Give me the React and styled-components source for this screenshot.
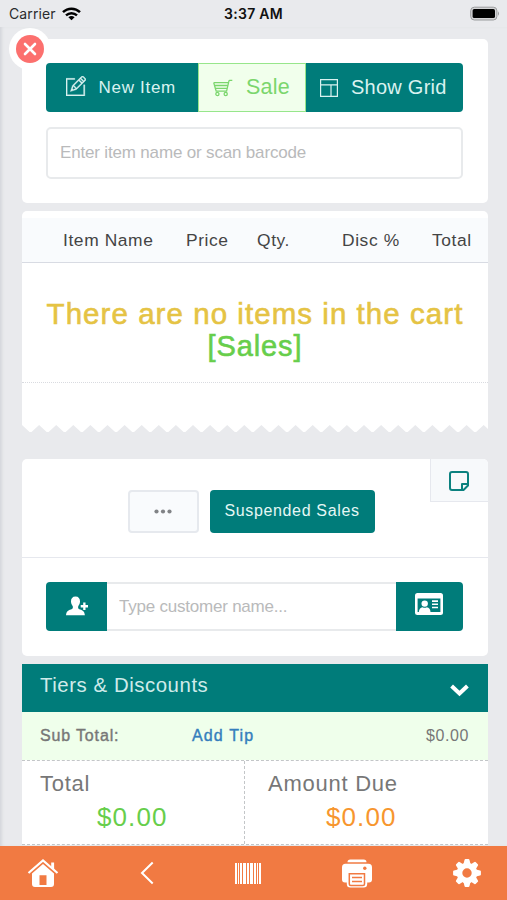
import React from 'react';
import styled, { createGlobalStyle } from 'styled-components';
import { TfiPencilAlt } from 'react-icons/tfi';

const GlobalStyle = createGlobalStyle`
    * {
        box-sizing: border-box;
    }

    body {
        margin: 0;
        background: #e9eaed;
        font-family: 'Liberation Sans', Arial, sans-serif;
    }

    button {
        font-family: inherit;
        margin: 0;
        padding: 0;
        border: 0;
    }
`;

const Screen = styled.div`
    position: relative;
    display: flex;
    flex-direction: column;
    width: 507px;
    height: 900px;
    overflow: hidden;
    background: #e9eaed;
`;

const StatusBar = styled.header`
    display: grid;
    grid-template-columns: 1fr auto 1fr;
    align-items: center;
    flex: none;
    height: 27px;
    padding: 0 7px 0 9px;
    font-family: Inter, sans-serif;
    font-size: 14px;
    color: #2b2c2e;

    .carrier {
        display: flex;
        align-items: center;
        gap: 6px;
        letter-spacing: 0.1px;
    }

    .time {
        margin-right: 2px;
        font-weight: 600;
        color: #111;
        letter-spacing: 0.3px;
    }

    .battery {
        justify-self: end;
    }
`;

const Content = styled.main`
    flex: 1;
    min-height: 0;
    padding: 12px 19px 0 22px;
    box-shadow: inset 3px 0 3px -1px #d5d7db;
`;

const Card = styled.section`
    height: ${({ $height }) => $height}px;
    margin-bottom: ${({ $gap }) => $gap || 0}px;
    padding-top: ${({ $top }) => $top || 0}px;
    border-radius: ${({ $radius }) => $radius || '5px'};
    background: #fff;
`;

const CloseButton = styled.button`
    position: absolute;
    left: 9px;
    top: 28px;
    display: flex;
    align-items: center;
    justify-content: center;
    width: 42px;
    height: 42px;
    border-radius: 50%;
    background: #fff;
`;

const Search = styled.div`
    display: flex;
    flex-direction: column;
    gap: 15px;
    padding: 24px 25px 0 24px;
`;

const ButtonGroup = styled.div`
    display: flex;
    height: 49px;
    border-radius: 4px;
    overflow: hidden;
`;

const GroupButton = styled.button`
    display: flex;
    align-items: center;
    width: ${({ $width }) => $width}px;
    padding-left: ${({ $pad }) => $pad}px;
    gap: ${({ $gap }) => $gap}px;
    font-size: ${({ $size }) => $size}px;
    letter-spacing: ${({ $spacing }) => $spacing}px;
    white-space: nowrap;
    color: ${({ $active }) => ($active ? '#7bd66d' : '#d9f2f0')};
    background: ${({ $active }) => ($active ? '#f1ffec' : '#007c7a')};
    border: ${({ $active }) => ($active ? '1px solid #97e68b' : '0')};

    svg {
        flex: none;
    }

    .pencil {
        margin-bottom: 3px;
        stroke: currentColor;
        stroke-width: 0.3px;
    }
`;

const Field = styled.input`
    width: 100%;
    height: ${({ $height }) => $height}px;
    padding: 0 12px;
    border: solid #e8eaec;
    border-width: ${({ $joined }) => ($joined ? '2px 0' : '2px')};
    border-radius: ${({ $joined }) => ($joined ? '0' : '5px')};
    outline: 0;
    background: #fff;
    font-family: inherit;
    font-size: 17px;
    letter-spacing: ${({ $spacing }) => $spacing}px;

    &::placeholder {
        color: #b9babb;
        opacity: 1;
    }
`;

const TableHead = styled.div`
    display: grid;
    grid-template-columns: 123px 71px 85px 90px 1fr;
    align-items: center;
    height: 45px;
    padding-left: 41px;
    border-bottom: 1px solid #d8dbe3;
    background: #f9fbfd;
    color: #444;
    font-size: 17.4px;
    letter-spacing: 0.6px;
    white-space: nowrap;
`;

const EmptyCart = styled.div`
    height: 120px;
    padding-top: 35px;
    border-bottom: 1px dotted #d9dbe0;
    text-align: center;
    font-size: 29.5px;
    line-height: 32px;
    letter-spacing: 1.05px;
    white-space: nowrap;
    color: #e5c344;
    -webkit-text-stroke: 0.6px currentColor;

    .mode {
        color: #67ce4b;
        font-size: 29px;
        letter-spacing: 0.9px;
    }
`;

const TornEdge = styled.svg`
    display: block;
    width: 466px;
    height: 7px;
    margin-bottom: 27px;
`;

const SaleActions = styled.div`
    position: relative;
    display: flex;
    justify-content: center;
    gap: 11px;
    height: 99px;
    padding: 31px 8px 0 0;
    border-bottom: 1px solid #e6e8ee;
`;

const MoreButton = styled.button`
    width: 71px;
    height: 43px;
    border: 2px solid #e6e9ee;
    border-radius: 4px;
    background: #f9fbfd;
    line-height: 0;
`;

const SuspendedButton = styled.button`
    width: 165px;
    height: 43px;
    border-radius: 4px;
    padding-bottom: 2px;
    background: #007c7a;
    color: #e5f7f5;
    font-size: 16px;
    letter-spacing: 0.65px;
    white-space: nowrap;
`;

const NoteTab = styled.button`
    position: absolute;
    right: 0;
    top: 0;
    width: 58px;
    height: 43px;
    border-left: 1px solid #e6e8ee;
    border-bottom: 1px solid #e6e8ee;
    border-radius: 0 5px 0 0;
    background: #f7f9fb;

    svg {
        display: block;
        margin: 1px auto 0 18px;
    }
`;

const CustomerRow = styled.div`
    display: flex;
    height: 49px;
    margin: 24px 25px 0 24px;
    border-radius: 4px;
    overflow: hidden;
`;

const IconButton = styled.button`
    display: flex;
    flex: none;
    align-items: center;
    justify-content: center;
    width: ${({ $width }) => $width}px;
    padding: 0 ${({ $shift }) => $shift || 0}px ${({ $lift }) => $lift || 0}px 0;
    background: #007c7a;
`;

const TiersBar = styled.div`
    display: flex;
    align-items: center;
    justify-content: space-between;
    height: 48px;
    padding: 0 19px 5px 18px;
    background: #007c7a;
    color: #cfebea;
    font-size: 20.4px;
    letter-spacing: 0.55px;

    svg {
        margin-top: 10px;
    }
`;

const SubTotal = styled.div`
    display: grid;
    grid-template-columns: 152px 1fr auto;
    align-items: center;
    height: 48px;
    padding: 0 19px 0 18px;
    background: #efffeb;
    color: #777;
    font-size: 16px;
    letter-spacing: 0.6px;

    .label,
    .tip {
        letter-spacing: 0.85px;
        -webkit-text-stroke: 0.4px currentColor;
    }

    .tip {
        color: #357ebd;
        letter-spacing: 1.15px;
    }
`;

const Totals = styled.div`
    display: grid;
    grid-template-columns: 223px 1fr;
    height: 85px;
    border-top: 1px dashed #c3c6c8;
    border-bottom: 1px dashed #c3c6c8;
    background: #fff;
`;

const TotalCell = styled.div`
    padding: 11px 0 0 ${({ $pad }) => $pad}px;
    border-right: ${({ $divided }) => ($divided ? '1px dashed #c3c6c8' : '0')};
    color: #777;
    font-size: 22px;
    line-height: 24px;
    letter-spacing: 0.75px;

    .amount {
        margin-top: 5px;
        padding-left: ${({ $indent }) => $indent}px;
        color: ${({ $color }) => $color};
        font-size: 26px;
        line-height: 32px;
        letter-spacing: 1.1px;
    }
`;

const TabBar = styled.nav`
    position: relative;
    display: flex;
    align-items: center;
    justify-content: space-between;
    flex: none;
    height: 54px;
    padding: 0 26px 0 27px;
    background: #f17a42;
`;

const Wifi = () => (
    <svg width="19" height="14" viewBox="0 0 19 14" fill="none" stroke="#000" strokeWidth="2.5">
        <path d="M1 5.2C5.8.5 13.2.5 18 5.2M4 8.4C7.2 5.5 11.8 5.5 15 8.4" />
        <path d="M9.5 13.2 6.4 10.2Q9.5 7.9 12.6 10.2Z" fill="#000" stroke="none" />
    </svg>
);

const Battery = () => (
    <svg className="battery" width="30" height="15" viewBox="0 0 30 15">
        <rect x="0.7" y="1.2" width="26.2" height="12.8" rx="3.6" fill="#d4d4d6" stroke="#9a9b9d" />
        <rect x="2.6" y="3.1" width="22.4" height="9" rx="1.6" fill="#000" />
        <path d="M28 5.2q2 2.3 0 4.6z" fill="#9a9b9d" />
    </svg>
);

const CloseIcon = () => (
    <svg width="28" height="28" viewBox="0 0 28 28">
        <circle cx="14" cy="14" r="14" fill="#fc706e" />
        <path d="M9 9l10 10M19 9L9 19" stroke="#fff" strokeWidth="2.6" strokeLinecap="round" />
    </svg>
);

const CartIcon = () => (
    <svg width="20" height="18" viewBox="0 0 20 18" fill="none" stroke="currentColor" strokeWidth="1.3">
        <path d="M.7 3.6h14.8M.7 3.600 2.300 9.300h11.900M1.500 6.500h13.200M19.300 1.300h-2.500q-.7 0-.9.800L13.600 12.200H3.200L2.300 9.300" />
        <circle cx="4.400" cy="15" r="1.600" />
        <circle cx="12.700" cy="15" r="1.600" />
    </svg>
);

const LayoutIcon = () => (
    <svg width="18" height="18" viewBox="0 0 18 18" fill="none" stroke="currentColor" strokeWidth="1.2">
        <path d="M.6.6h16.8v16.8H.6zM.6 5.8h16.8M11 5.8v11.6" />
    </svg>
);

const Dots = () => (
    <svg width="18" height="5" viewBox="0 0 18 5" fill="#818386">
        <circle cx="2.5" cy="2.5" r="2.1" />
        <circle cx="9" cy="2.5" r="2.1" />
        <circle cx="15.5" cy="2.5" r="2.1" />
    </svg>
);

const NoteIcon = () => (
    <svg width="20" height="20" viewBox="0 0 20 20" fill="none" stroke="#0b817f" strokeWidth="2" strokeLinejoin="round">
        <path d="M3 1h14a2 2 0 0 1 2 2v11.500L14.500 19H3a2 2 0 0 1-2-2V3a2 2 0 0 1 2-2z" />
        <path d="M13 18.500V13h5.500" />
    </svg>
);

const PersonAddIcon = () => (
    <svg width="22" height="20" viewBox="0 0 22 20" fill="#fff">
        <path d="M9.5.5c3 0 4.700 2 4.500 5-.1 2-.7 3.400-1.700 4.500-.5 1.900-.2 2.900 1.700 3.500 2.900.9 4.500 1.700 4.900 5.800H0c.4-4.100 2-4.900 4.900-5.800 1.900-.6 2.300-1.600 1.800-3.500C5.700 8.900 5.100 7.500 5 5.500c-.2-3 1.500-5 4.500-5z" />
        <path d="M17.200 6.600h2.300v2.500H22v2.300h-2.500v2.500h-2.300v-2.500h-2.500V9.100h2.500z" />
    </svg>
);

const IdCardIcon = () => (
    <svg width="28" height="22" viewBox="0 0 28 22">
        <rect width="28" height="22" rx="2.500" fill="#fff" />
        <path d="M2.600 5.600h22.800v13.500H2.600z" fill="#007c7a" />
        <g fill="#fff">
            <circle cx="9.700" cy="10.600" r="3.200" />
            <path d="M3.800 19.400c.2-3.300 1.500-4.800 3.700-5.200q2.200 1.200 4.400 0c2.200.4 3.500 1.900 3.700 5.200zM17 7.300h6v1.600h-6zM17 10.500h6v1.600h-6zM17 13.700h6v1.600h-6z" />
        </g>
    </svg>
);

const ChevronDown = () => (
    <svg width="19" height="13" viewBox="0 0 19 13" fill="none" stroke="#fff" strokeWidth="4">
        <path d="M1.600 2 9.500 9.500 17.400 2" />
    </svg>
);

const HomeIcon = () => (
    <svg width="32" height="30" viewBox="0 0 32 30">
        <path d="M1.500 15 16 2.500 30.500 15" fill="none" stroke="#fff" strokeWidth="2.200" />
        <path d="M24.200 4.500h2.900v7.200l-2.900-2.500z" fill="#fff" />
        <path
            fill="#fff"
            fillRule="evenodd"
            d="M16 6 27 15.500V26q0 3-3 3H8q-3 0-3-3V15.500zM12.500 17.300v9.700h7v-9.700z"
        />
    </svg>
);

const BackIcon = () => (
    <svg width="14" height="24" viewBox="0 0 14 24" fill="none" stroke="#fff" strokeWidth="2">
        <path d="M12.700 1.500 2 12l10.700 10.500" />
    </svg>
);

// x offset and width of each bar
const bars = [[0, 2], [3, 1], [5, 2], [8, 3], [12, 2], [15, 3], [19, 2], [22, 1], [24, 2]];

const BarcodeIcon = () => (
    <svg width="26" height="21" viewBox="0 0 26 21" fill="#fff">
        {bars.map(([x, width]) => (
            <rect key={x} x={x} width={width} height="21" />
        ))}
    </svg>
);

const PrintIcon = () => (
    <svg width="30" height="29" viewBox="0 0 30 29">
        <path d="M5.500 3.300Q5.500.5 8.300.5h13.400q2.800 0 2.800 2.800z" fill="#fff" />
        <path
            d="M3.500 4.800h23Q30 4.800 30 8.500v12q0 3-3 3h-1.800V25q0 3.500-3.500 3.500H8.300Q4.800 28.500 4.800 25v-1.500H3q-3 0-3-3v-12Q0 4.800 3.500 4.800z"
            fill="#fff"
        />
        <circle cx="22.800" cy="9.200" r="1.700" fill="#f17a42" />
        <path d="M7.300 14.700h15.200v10.300q0 1.500-1.500 1.500H8.800q-1.500 0-1.500-1.500z" fill="none" stroke="#f17a42" strokeWidth="1.500" />
        <path d="M10 18.500h10M10 22.500h10" stroke="#f17a42" strokeWidth="1.500" />
    </svg>
);

const GearIcon = () => (
    <svg width="28" height="28" viewBox="-14 -14 28 28">
        <circle r="7.500" fill="none" stroke="#fff" strokeWidth="5.600" />
        {[0, 45, 90, 135, 180, 225, 270, 315].map((angle) => (
            <path key={angle} d="M-3.500-9-2.500-13q.2-.9 1.100-.9h2.800q.9 0 1.100.9L3.500-9z" fill="#fff" transform={`rotate(${angle})`} />
        ))}
    </svg>
);

const Zigzag = () => {
    let d = 'M0 0';
    for (let x = 0; x < 466; x += 17.1) {
        d += `L${x + 7.6} 7h1.900L${x + 17.1} 0`;
    }
    return (
        <TornEdge viewBox="0 0 466 7">
            <path d={`${d}Z`} fill="#fff" />
        </TornEdge>
    );
};

const App = () => (
    <>
        <GlobalStyle />
        <Screen>
            <StatusBar>
                <div className="carrier">
                    Carrier
                    <Wifi />
                </div>
                <div className="time">3:37 AM</div>
                <Battery />
            </StatusBar>
            <Content>
                <Card $height={164} $gap={8}>
                    <Search>
                        <ButtonGroup>
                            <GroupButton $width={152} $pad={20} $gap={12.5} $size={17} $spacing={0.7}>
                                <TfiPencilAlt className="pencil" size={20} />
                                New Item
                            </GroupButton>
                            <GroupButton $active $width={108} $pad={14} $gap={13} $size={21.5} $spacing={0.2}>
                                <CartIcon />
                                Sale
                            </GroupButton>
                            <GroupButton $width={157} $pad={14} $gap={13} $size={20} $spacing={0.25}>
                                <LayoutIcon />
                                Show Grid
                            </GroupButton>
                        </ButtonGroup>
                        <Field $height={52} $spacing={-0.17} placeholder="Enter item name or scan barcode" />
                    </Search>
                </Card>

                <Card $height={214} $top={7} $radius="5px 5px 0 0">
                    <TableHead>
                        <span>Item Name</span>
                        <span>Price</span>
                        <span>Qty.</span>
                        <span>Disc %</span>
                        <span>Total</span>
                    </TableHead>
                    <EmptyCart>
                        There are no items in the cart
                        <div className="mode">[Sales]</div>
                    </EmptyCart>
                </Card>
                <Zigzag />

                <Card $height={197} $gap={8}>
                    <SaleActions>
                        <MoreButton>
                            <Dots />
                        </MoreButton>
                        <SuspendedButton>Suspended Sales</SuspendedButton>
                        <NoteTab>
                            <NoteIcon />
                        </NoteTab>
                    </SaleActions>
                    <CustomerRow>
                        <IconButton $width={61} $lift={1}>
                            <PersonAddIcon />
                        </IconButton>
                        <Field $joined $height={49} $spacing={-0.22} placeholder="Type customer name..." />
                        <IconButton $width={67} $lift={5} $shift={2}>
                            <IdCardIcon />
                        </IconButton>
                    </CustomerRow>
                </Card>

                <TiersBar>
                    Tiers &amp; Discounts
                    <ChevronDown />
                </TiersBar>
                <SubTotal>
                    <span className="label">Sub Total:</span>
                    <span className="tip">Add Tip</span>
                    <span>$0.00</span>
                </SubTotal>
                <Totals>
                    <TotalCell $divided $pad={18} $indent={57} $color="#67ce4b">
                        Total
                        <div className="amount">$0.00</div>
                    </TotalCell>
                    <TotalCell $pad={23} $indent={58} $color="#f7962e">
                        Amount Due
                        <div className="amount">$0.00</div>
                    </TotalCell>
                </Totals>
            </Content>
            <TabBar>
                <HomeIcon />
                <BackIcon />
                <BarcodeIcon />
                <PrintIcon />
                <GearIcon />
            </TabBar>
            <CloseButton>
                <CloseIcon />
            </CloseButton>
        </Screen>
    </>
);

export default App;
